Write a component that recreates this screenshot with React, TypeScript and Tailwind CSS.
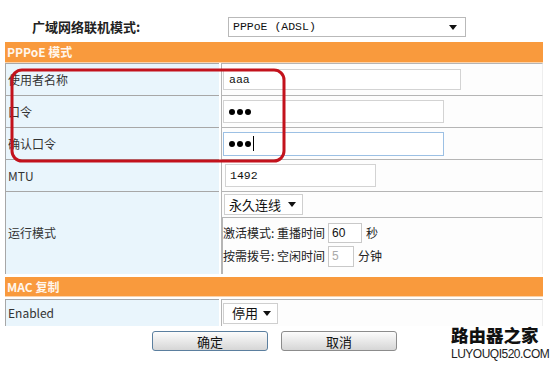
import React from "react";

const Arrow = () => (
    <svg width="8" height="5" viewBox="0 0 8 5" className="shrink-0">
        <path d="M0 0 H8 L4 5 Z" fill="#111" />
    </svg>
);

const Dots = () => (
    <span className="flex items-center gap-[2px]">
        <span className="w-[6px] h-[6px] rounded-full bg-black" />
        <span className="w-[6px] h-[6px] rounded-full bg-black" />
        <span className="w-[6px] h-[6px] rounded-full bg-black" />
    </span>
);

const Row = ({
    label,
    h = "h-[32px]",
    children,
}: {
    label: string;
    h?: string;
    children: React.ReactNode;
}) => (
    <div className={`flex gap-[2px] ${h}`}>
        <div className="w-[214px] shrink-0 bg-[#e9f5fc] border-t border-l border-[#a7a7a7] flex items-center pl-[2px] text-[12px] text-[#333]">
            {label}
        </div>
        <div className="flex-1 border-t border-l border-[#b5b5b5] border-r border-r-[#eeeeee] bg-[#fdfdfd] flex items-center">
            {children}
        </div>
    </div>
);

export default function App() {
    return (
        <div className="relative w-[553px] h-[370px] bg-white overflow-hidden font-['Noto_Sans_CJK_SC','Noto_Sans',sans-serif]">
            {/* 标题行 */}
            <div className="flex pt-[17px] h-[37px]">
                <div className="w-[228px] pl-[32px] text-[13px] font-bold leading-[20px] text-[#222]">
                    广域网络联机模式:
                </div>
                <div className="w-[238px] h-[20px] border border-[#b9b9b9] bg-white flex items-center justify-between pl-[4px] pr-[8px]">
                    <span className="font-['Liberation_Mono',monospace] text-[11.5px] text-[#111]">PPPoE (ADSL)</span>
                    <Arrow />
                </div>
            </div>

            <div className="ml-[5px] w-[538px] mt-[5px]">
                <div className="h-[21px] bg-[#f99a3d] border-b border-[#fcd3ab] flex items-center pl-[2px] text-[12px] font-bold text-[#fff6ec]">
                    PPPoE 模式
                </div>

                <Row label="使用者名称">
                    <div className="ml-[1px] w-[238px] h-[21px] border border-[#d3d3d3] bg-white flex items-center pl-[5px] font-['Liberation_Mono',monospace] text-[11.5px] text-[#111]">
                        aaa
                    </div>
                </Row>
                <Row label="口令">
                    <div className="ml-[1px] w-[221px] h-[23px] border border-[#d3d3d3] bg-white flex items-center pl-[5px]">
                        <Dots />
                    </div>
                </Row>
                <Row label="确认口令">
                    <div className="ml-[1px] w-[221px] h-[24px] border border-[#9cc0e4] bg-white flex items-center pl-[5px]">
                        <Dots />
                        <span className="ml-[2px] w-px h-[15px] bg-black" />
                    </div>
                </Row>
                <Row label="MTU">
                    <div className="ml-[3px] w-[151px] h-[23px] border border-[#d3d3d3] bg-white flex items-center pl-[4px] font-['Liberation_Mono',monospace] text-[11.5px] text-[#111]">
                        1492
                    </div>
                </Row>

                {/* 运行模式 */}
                <div className="flex gap-[2px] h-[83px]">
                    <div className="w-[214px] shrink-0 bg-[#e9f5fc] border-t border-l border-[#a7a7a7] flex items-center pl-[2px] text-[12px] text-[#333]">
                        运行模式
                    </div>
                    <div className="flex-1 border-t border-l border-[#b5b5b5] border-r border-r-[#eeeeee] bg-[#fdfdfd] flex flex-col">
                        <div className="h-[25px] flex items-center">
                            <div className="ml-[2px] w-[79px] h-[21px] border border-[#cfcfcf] bg-white flex items-center justify-between pl-[4px] pr-[6px] text-[13px] text-[#111]">
                                永久连线
                                <Arrow />
                            </div>
                        </div>
                        <div className="flex-1 border-t border-l border-[#b5b5b5] flex flex-col justify-center gap-[2px] text-[12px] text-[#222] pb-[3px]">
                            <div className="flex items-center h-[21px]">
                                <span className="w-[105px]">激活模式: 重播时间</span>
                                <div className="w-[34px] h-[20px] border border-[#c9c9c9] bg-white flex items-center pl-[3px] text-[12px] text-[#111] font-['Liberation_Sans',sans-serif]">
                                    60
                                </div>
                                <span className="ml-[4px]">秒</span>
                            </div>
                            <div className="flex items-center h-[21px]">
                                <span className="w-[105px]">按需拨号: 空闲时间</span>
                                <div className="w-[26px] h-[21px] border border-[#c9c9c9] bg-white flex items-center pl-[3px] text-[12px] text-[#aaa] font-['Liberation_Sans',sans-serif]">
                                    5
                                </div>
                                <span className="ml-[4px]">分钟</span>
                            </div>
                        </div>
                    </div>
                </div>

                <div className="mt-[3px] h-[20px] bg-[#f99a3d] border-b border-[#fcd3ab] flex items-center pl-[2px] text-[12px] font-bold text-[#fff6ec]">
                    MAC 复制
                </div>

                <div className="mt-[2px]">
                    <Row label="Enabled" h="h-[27px]">
                        <div className="ml-[1px] w-[55px] h-[21px] border border-[#cfcfcf] bg-white flex items-center justify-between pl-[8px] pr-[6px] text-[13px] text-[#111]">
                            停用
                            <Arrow />
                        </div>
                    </Row>
                </div>
            </div>

            {/* 按钮 */}
            <div className="flex mt-[5px] pl-[152px] gap-[13px]">
                <button className="w-[116px] h-[20px] rounded-[3px] border border-[#5b7f9f] bg-gradient-to-b from-[#fcfcfc] to-[#d6d6d6] text-[13px] text-[#111] leading-none">
                    确定
                </button>
                <button className="w-[116px] h-[20px] rounded-[3px] border border-[#8c8c8c] bg-gradient-to-b from-[#fcfcfc] to-[#d6d6d6] text-[13px] text-[#111] leading-none">
                    取消
                </button>
            </div>

            {/* 红色标注框 */}
            <svg className="absolute left-0 top-0 pointer-events-none" width="553" height="370">
                <rect x="12" y="70" width="272" height="91" rx="10" fill="none" stroke="#c3121c" strokeWidth="3" />
            </svg>

            {/* 水印 */}
            <div className="absolute left-[451px] top-[325px] flex flex-col items-start">
                <span className="text-[17.5px] font-black leading-[19px] text-[#111]">路由器之家</span>
                <span className="mt-[4px] font-['Liberation_Sans',sans-serif] text-[12px] leading-[13px] text-[#222] tracking-[-0.5px]">LUYOUQI520.COM</span>
            </div>
        </div>
    );
}
